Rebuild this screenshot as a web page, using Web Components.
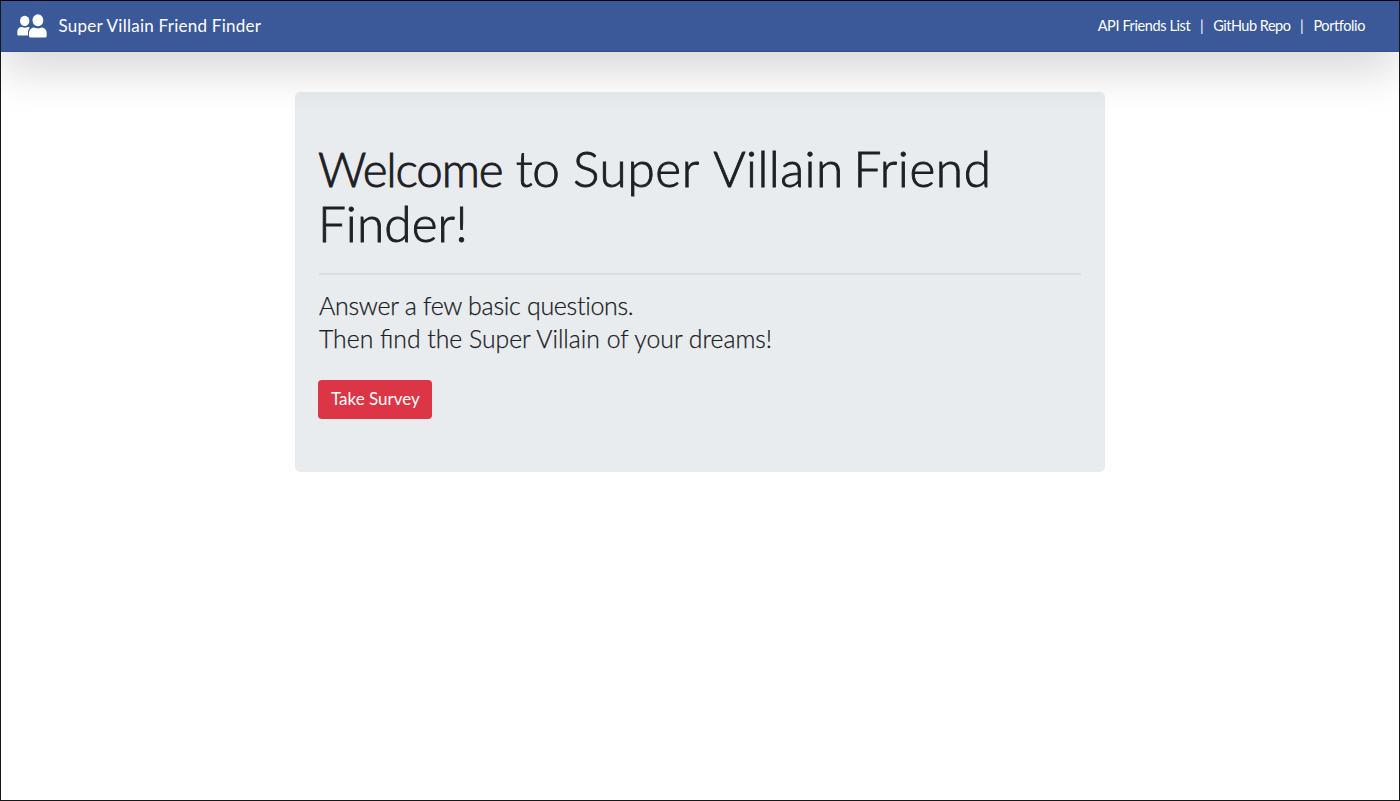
<!DOCTYPE html>
<html lang="en">
<head>
<meta charset="utf-8">
<title>Super Villain Friend Finder</title>
<style>
html, body { margin: 0; height: 100%; }
body { background: #fff; font-family: Lato, "Open Sans", sans-serif; color: #1c2024; }
.welcome { font-size: 47.5px; letter-spacing: -1.2px; }
.to { letter-spacing: -.3px; }
.super { letter-spacing: .6px; }
.villain { letter-spacing: .4px; word-spacing: -4px; }
.friend { letter-spacing: .6px; }
.finder { letter-spacing: .1px; }
.first { letter-spacing: -.3px; }
.second { font-size: 24.75px; }
</style>
</head>
<body>
<friend-app>
  <nav-bar slot="nav">
    <span slot="brand">Super Villain Friend Finder</span>
    <nav-link style="letter-spacing:-.4px">API Friends List</nav-link>
    <nav-link style="letter-spacing:-.5px">GitHub Repo</nav-link>
    <nav-link style="letter-spacing:-.4px">Portfolio</nav-link>
  </nav-bar>
  <jumbo-card>
    <span slot="title"><span class="welcome">Welcome</span> <span class="to">to</span> <span class="super">Super</span> <span class="villain">Villain </span><span class="friend">Friend</span><br><span class="finder">Finder!</span></span>
    <span slot="lead"><span class="first">Answer a few basic questions.</span><br><span class="second">Then find the Super Villain of your dreams!</span></span>
    <survey-button slot="action">Take Survey</survey-button>
  </jumbo-card>
</friend-app>
<script>
const define = (name, html) => customElements.define(name, class extends HTMLElement {
  constructor() {
    super();
    this.attachShadow({ mode: 'open' }).innerHTML = html;
  }
});

define('friend-app', `
  <style>
    :host { display: flex; flex-direction: column; box-sizing: border-box; height: 100vh; border: 1px solid #17171a; border-top-color: #050510; overflow: hidden; }
    main { display: flex; justify-content: center; padding-top: 40.4px; }
  </style>
  <slot name="nav"></slot>
  <main><slot></slot></main>`);

define('users-icon', `
  <style>:host { display: block; width: 30px; height: 24px; } svg { display: block; }</style>
  <svg width="30" height="24" viewBox="0 0 30 24" fill="#fff">
    <ellipse cx="7.7" cy="6.9" rx="4.7" ry="5.2"/>
    <path d="M.3 19.700v-1.900c0-2.900 2-4.800 4.600-4.800 1.900 1 3.900 1 5.800 0 .9 0 1.600.3 2.200.8-1.300 1.300-1.900 3-1.900 5.100v2.500H1.300c-.7 0-1-.7-1-1.700z"/>
    <ellipse cx="20.900" cy="6.300" rx="5.400" ry="6"/>
    <path d="M12 21.500v-2.200c0-3.400 2.200-5.900 5.300-5.900 2.400 1.200 4.800 1.200 7.200 0 3.100 0 5.200 2.500 5.200 5.900v2.200c0 1.300-.5 2.100-1.500 2.100H13.500c-1 0-1.500-.8-1.500-2.100z"/>
  </svg>`);

define('nav-bar', `
  <style>
    :host { display: flex; align-items: center; justify-content: space-between; box-sizing: border-box; flex: none; height: 51px; padding: 0 34px 0 16px; background: #3b5998; color: #fff; position: relative; z-index: 1; box-shadow: 0 16px 48px rgba(0,0,0,.175); border-bottom: 1px solid #35508f; }
    .brand { display: flex; align-items: center; gap: 11.5px; font-size: 17px; line-height: 24px; letter-spacing: .25px; white-space: nowrap; }
    .brand slot { display: block; padding-bottom: 1px; }
    nav { display: flex; font-size: 14.5px; line-height: 20px; padding-bottom: 1px; }
  </style>
  <div class="brand"><users-icon></users-icon><slot name="brand"></slot></div>
  <nav><slot></slot></nav>`);

define('nav-link', `
  <style>
    :host { display: flex; white-space: nowrap; }
    :host(:not(:last-of-type))::after { content: "|"; width: 23px; text-align: center; letter-spacing: 0; }
  </style>
  <slot></slot>`);

define('jumbo-card', `
  <style>
    :host { display: block; box-sizing: border-box; width: 810px; height: 379.5px; padding: 48.6px 24px 0; border-radius: 5px; background: #e8ecef; }
    h1 { margin: 0 0 0 -1px; height: 108px; font-size: 49.5px; line-height: 54px; font-weight: 300; white-space: nowrap; -webkit-text-stroke: .9px currentColor; }
    hr { margin: 24px 0 14px; border: 0; height: 2px; background: #dadee1; }
    p { margin: 0 0 25px; height: 66px; font-size: 25px; line-height: 33px; font-weight: 300; white-space: nowrap; -webkit-text-stroke: .25px currentColor; }
  </style>
  <h1><slot name="title"></slot></h1>
  <hr>
  <p><slot name="lead"></slot></p>
  <slot name="action"></slot>`);

define('survey-button', `
  <style>
    :host { display: flex; align-items: center; justify-content: center; box-sizing: border-box; width: 114px; height: 39px; margin-left: -.6px; padding: 0 0 1px; border-radius: 4px; background: #dc3545; color: #fff; font-size: 17px; white-space: nowrap; }
  </style>
  <slot></slot>`);
</script>
</body>
</html>
